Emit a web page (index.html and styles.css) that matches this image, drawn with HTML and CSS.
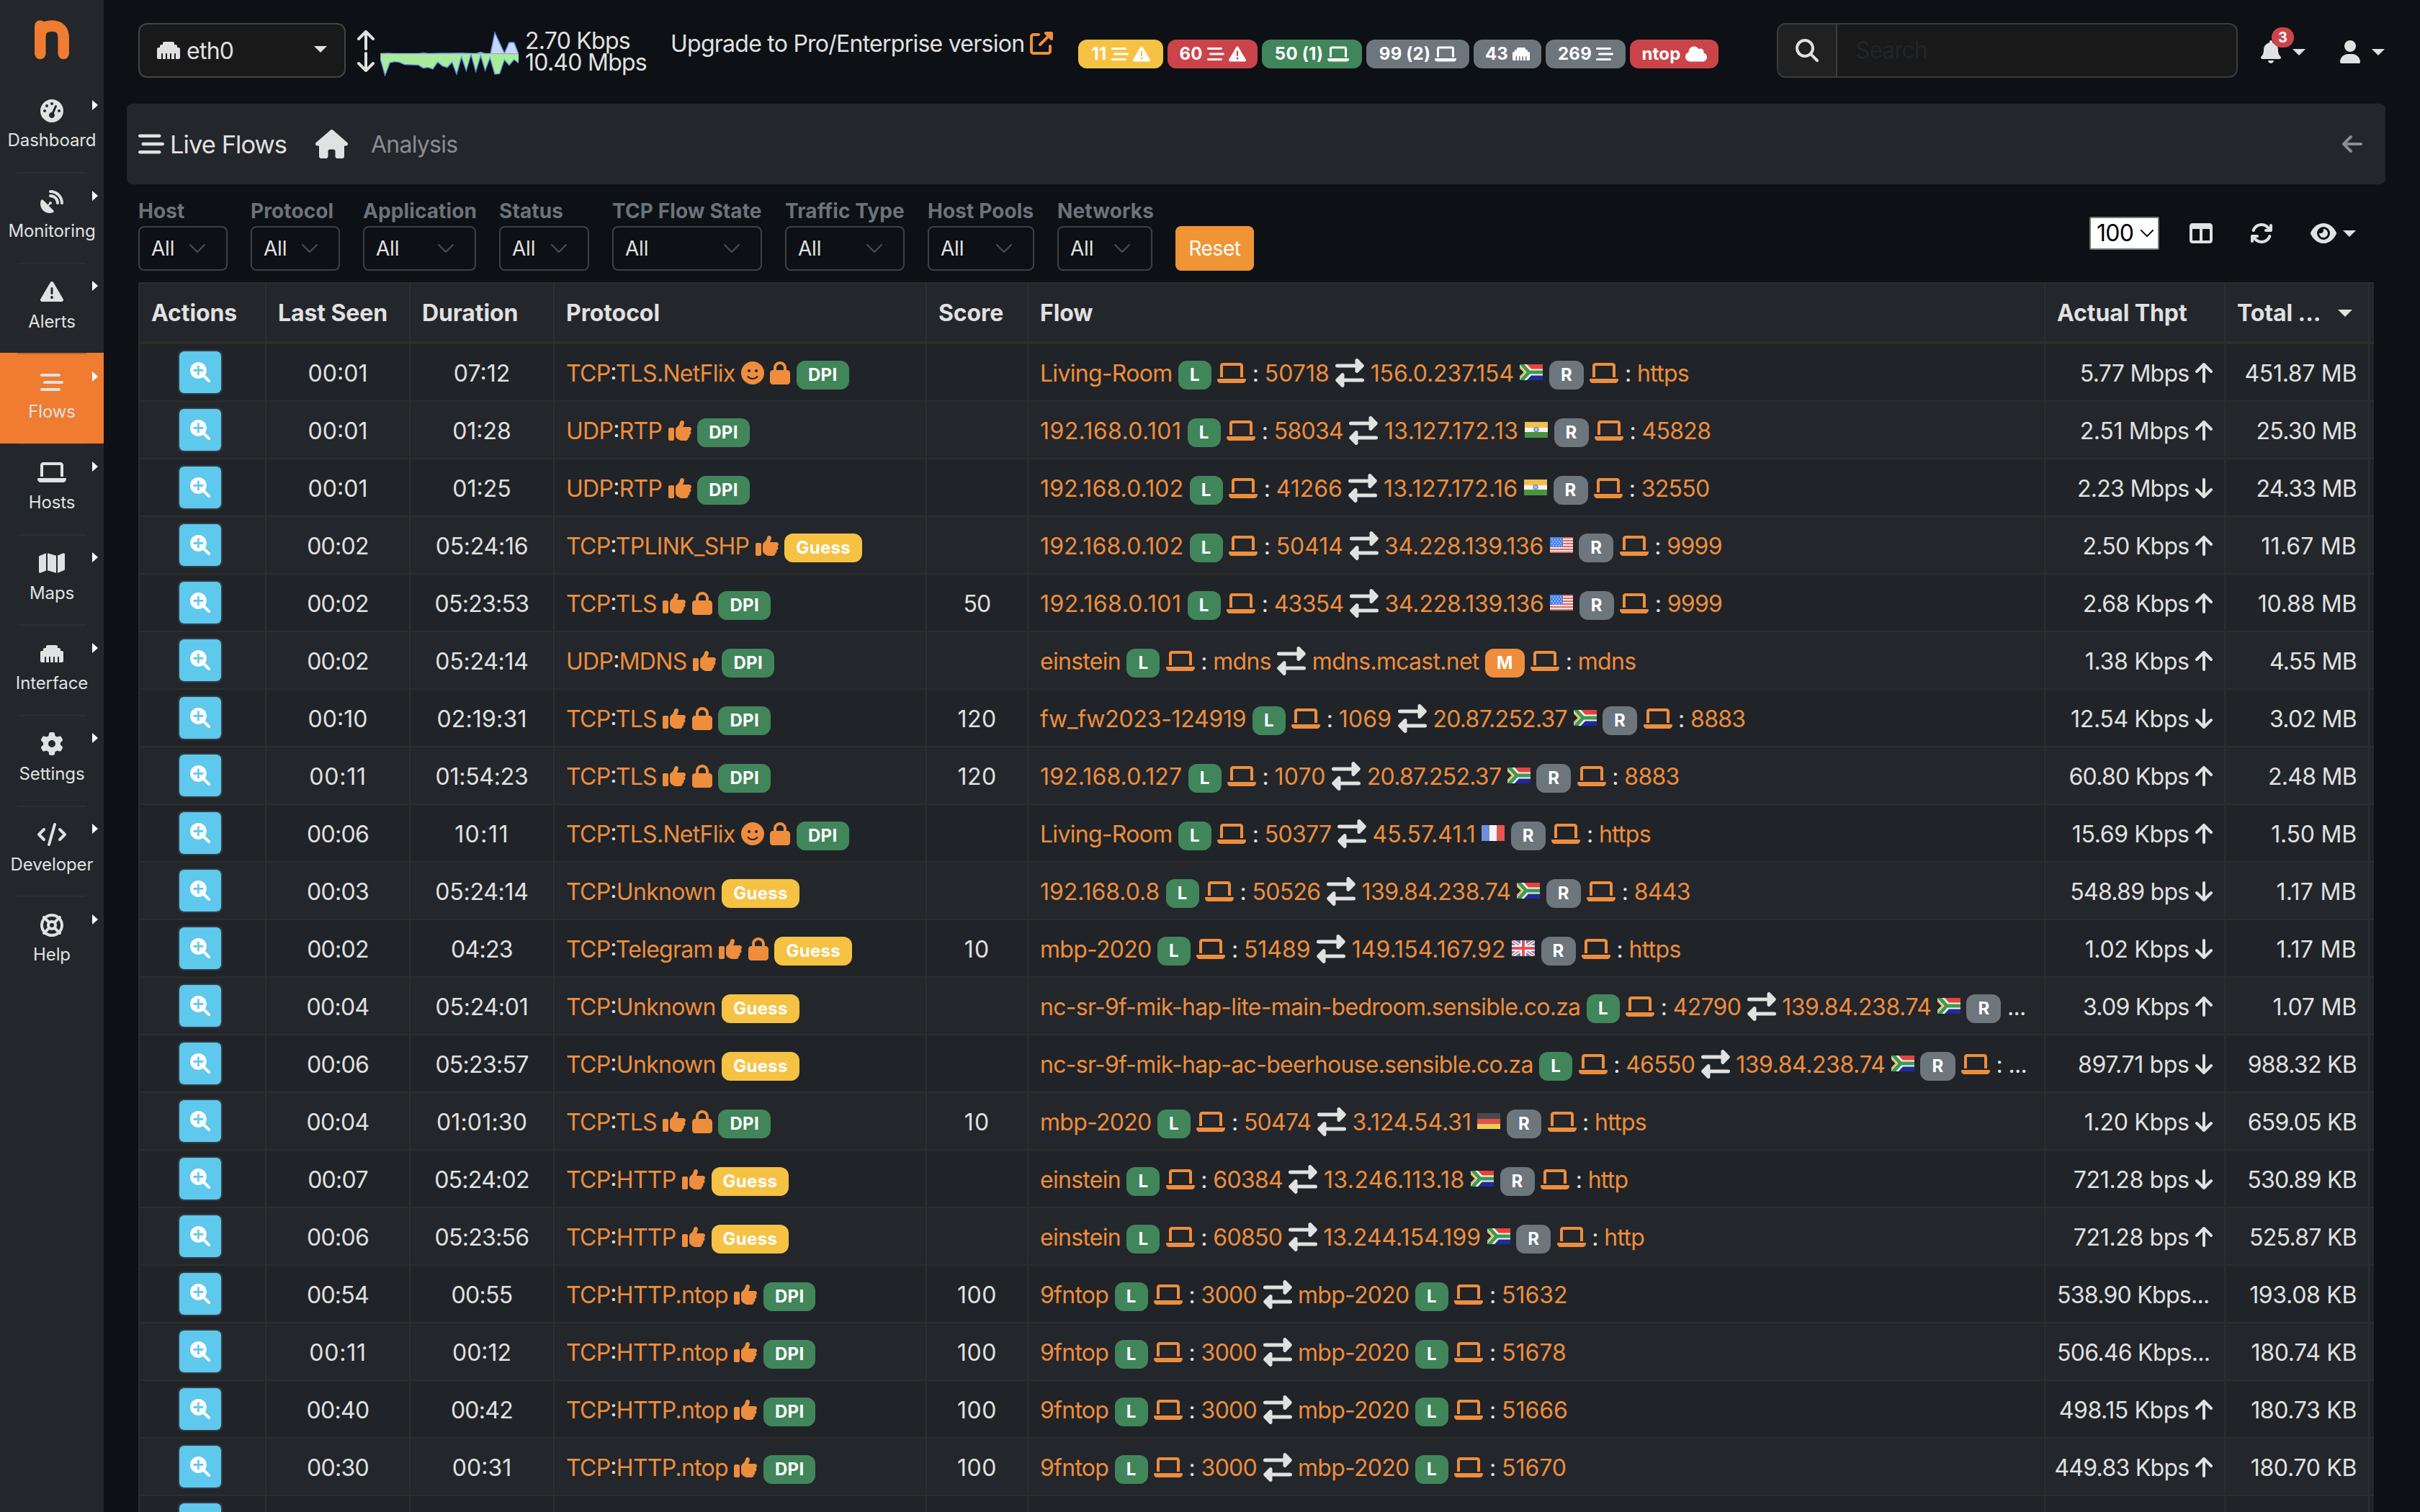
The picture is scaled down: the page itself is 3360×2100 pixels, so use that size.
FILE: index.html
```html
<!DOCTYPE html>
<html lang="en">
<head>
<meta charset="utf-8">
<title>Live Flows</title>
<link rel="stylesheet" href="styles.css">
</head>
<body>
<svg class="sprite" aria-hidden="true">
  <symbol id="gauge" viewBox="0 0 512 512"><path d="M0 256a256 256 0 1 1 512 0A256 256 0 1 1 0 256zM288 96a32 32 0 1 0 -64 0 32 32 0 1 0 64 0zM256 416c35.3 0 64-28.7 64-64c0-17.4-6.9-33.1-18.1-44.6L366 161.7c5.3-12.1-.2-26.3-12.3-31.6s-26.3 .2-31.6 12.3L257.9 288c-.6 0-1.3 0-1.9 0c-35.3 0-64 28.7-64 64s28.7 64 64 64zM176 144a32 32 0 1 0 -64 0 32 32 0 1 0 64 0zM96 288a32 32 0 1 0 0-64 32 32 0 1 0 0 64zm352-32a32 32 0 1 0 -64 0 32 32 0 1 0 64 0z"/></symbol>
  <symbol id="dish" viewBox="0 0 512 512"><path d="M192 32c0-17.7 14.3-32 32-32C383.1 0 512 128.9 512 288c0 17.7-14.3 32-32 32s-32-14.3-32-32C448 164.3 347.7 64 224 64c-17.7 0-32-14.3-32-32zM60.6 220.6L164.7 324.7l28.4-28.4c-.7-2.6-1.1-5.4-1.1-8.3c0-17.7 14.3-32 32-32s32 14.3 32 32s-14.3 32-32 32c-2.9 0-5.6-.4-8.3-1.1l-28.4 28.4L291.4 451.4c14.5 14.5 11.8 38.8-7.3 46.3C260.5 506.9 234.9 512 208 512C93.1 512 0 418.9 0 304c0-26.9 5.1-52.5 14.4-76.1c7.5-19 31.8-21.8 46.3-7.3zM224 96c106 0 192 86 192 192c0 17.7-14.3 32-32 32s-32-14.3-32-32c0-70.7-57.3-128-128-128c-17.7 0-32-14.3-32-32s14.3-32 32-32z"/></symbol>
  <symbol id="warn" viewBox="0 0 512 512"><path d="M256 32c14.2 0 27.3 7.5 34.5 19.8l216 368c7.3 12.4 7.3 27.7 .2 40.1S486.3 480 472 480H40c-14.3 0-27.6-7.7-34.7-20.1s-7-27.8 .2-40.1l216-368C228.7 39.5 241.8 32 256 32zm0 128c-13.3 0-24 10.7-24 24V296c0 13.3 10.7 24 24 24s24-10.7 24-24V184c0-13.3-10.7-24-24-24zm32 224a32 32 0 1 0 -64 0 32 32 0 1 0 64 0z"/></symbol>
  <symbol id="stream" viewBox="0 0 512 512"><path d="M0 96C0 78.3 14.3 64 32 64H416c17.7 0 32 14.3 32 32s-14.3 32-32 32H32C14.3 128 0 113.7 0 96zM64 256c0-17.7 14.3-32 32-32H480c17.7 0 32 14.3 32 32s-14.3 32-32 32H96c-17.7 0-32-14.3-32-32zM448 416c0 17.7-14.3 32-32 32H32c-17.7 0-32-14.3-32-32s14.3-32 32-32H416c17.7 0 32 14.3 32 32z"/></symbol>
  <symbol id="laptop" viewBox="0 0 640 512"><path d="M128 32C92.7 32 64 60.7 64 96V352h64V96H512V352h64V96c0-35.3-28.7-64-64-64H128zM19.2 384C8.6 384 0 392.6 0 403.2C0 445.6 34.4 480 76.8 480H563.2c42.4 0 76.8-34.4 76.8-76.8c0-10.6-8.6-19.2-19.2-19.2H19.2z"/></symbol>
  <symbol id="map" viewBox="0 0 576 512"><path d="M384 476.1L192 421.2V35.9L384 90.8V476.1zm32-1.2V88.4L543.1 37.5c15.8-6.3 32.9 5.3 32.9 22.3V394.6c0 9.8-6 18.6-15.1 22.3L416 474.8zM15.1 95.1L160 37.2V423.6L32.9 474.5C17.1 480.8 0 469.2 0 452.2V117.4c0-9.8 6-18.6 15.1-22.3z"/></symbol>
  <symbol id="ethernet" viewBox="0 0 512 512"><path d="M0 224V416c0 17.7 14.3 32 32 32H96V336c0-8.8 7.2-16 16-16s16 7.2 16 16V448h64V336c0-8.8 7.2-16 16-16s16 7.2 16 16V448h64V336c0-8.8 7.2-16 16-16s16 7.2 16 16V448h64V336c0-8.8 7.2-16 16-16s16 7.2 16 16V448h64c17.7 0 32-14.3 32-32V224c0-17.7-14.3-32-32-32H448V160c0-17.7-14.3-32-32-32H384V96c0-17.7-14.3-32-32-32H160c-17.7 0-32 14.3-32 32v32H96c-17.7 0-32 14.3-32 32v32H32c-17.7 0-32 14.3-32 32z"/></symbol>
  <symbol id="gear" viewBox="0 0 512 512"><path d="M495.9 166.6c3.2 8.7 .5 18.4-6.4 24.6l-43.3 39.4c1.1 8.3 1.7 16.8 1.7 25.4s-.6 17.1-1.7 25.4l43.3 39.4c6.9 6.2 9.6 15.9 6.4 24.6c-4.4 11.9-9.7 23.3-15.8 34.3l-4.7 8.1c-6.6 11-14 21.4-22.1 31.2c-5.9 7.2-15.7 9.6-24.5 6.8l-55.7-17.7c-13.4 10.3-28.2 18.9-44 25.4l-12.5 57.1c-2 9.1-9 16.3-18.2 17.8c-13.8 2.3-28 3.5-42.5 3.5s-28.7-1.2-42.5-3.5c-9.2-1.5-16.2-8.7-18.2-17.8l-12.5-57.1c-15.8-6.5-30.6-15.1-44-25.4L83.1 425.9c-8.8 2.8-18.6 .3-24.5-6.8c-8.1-9.8-15.5-20.2-22.1-31.2l-4.7-8.1c-6.1-11-11.4-22.4-15.8-34.3c-3.2-8.7-.5-18.4 6.4-24.6l43.3-39.4C64.6 273.1 64 264.6 64 256s.6-17.1 1.7-25.4L22.4 191.2c-6.9-6.2-9.6-15.9-6.4-24.6c4.4-11.9 9.7-23.3 15.8-34.3l4.7-8.1c6.6-11 14-21.4 22.1-31.2c5.9-7.2 15.7-9.6 24.5-6.8l55.7 17.7c13.4-10.3 28.2-18.9 44-25.4l12.5-57.1c2-9.1 9-16.3 18.2-17.8C227.3 1.2 241.5 0 256 0s28.7 1.2 42.5 3.5c9.2 1.5 16.2 8.7 18.2 17.8l12.5 57.1c15.8 6.5 30.6 15.1 44 25.4l55.7-17.7c8.8-2.8 18.6-.3 24.5 6.8c8.1 9.8 15.5 20.2 22.1 31.2l4.7 8.1c6.1 11 11.4 22.4 15.8 34.3zM256 336a80 80 0 1 0 0-160 80 80 0 1 0 0 160z"/></symbol>
  <symbol id="code" viewBox="0 0 640 512"><path d="M392.8 1.2c-17-4.9-34.7 5-39.6 22l-128 448c-4.9 17 5 34.7 22 39.6s34.7-5 39.6-22l128-448c4.9-17-5-34.7-22-39.6zm80.6 120.1c-12.5 12.5-12.5 32.8 0 45.3L562.7 256l-89.4 89.4c-12.5 12.5-12.5 32.8 0 45.3s32.8 12.5 45.3 0l112-112c12.5-12.5 12.5-32.8 0-45.3l-112-112c-12.5-12.5-32.8-12.5-45.3 0zm-306.7 0c-12.5-12.5-32.8-12.5-45.3 0l-112 112c-12.5 12.5-12.5 32.8 0 45.3l112 112c12.5 12.5 32.8 12.5 45.3 0s12.5-32.8 0-45.3L77.3 256l89.4-89.4c12.5-12.5 12.5-32.8 0-45.3z"/></symbol>
  <symbol id="ring" viewBox="0 0 512 512"><path d="M367.2 412.5C335.9 434.9 297.5 448 256 448s-79.9-13.1-111.2-35.5l58-58c15.8 8.6 34 13.5 53.3 13.5s37.4-4.9 53.3-13.5l58 58zm90.7 .8c33.8-43.4 54-98 54-157.3s-20.2-113.9-54-157.3c9-12.5 7.9-30.1-3.4-41.3S425.8 45 413.3 54C369.9 20.2 315.3 0 256 0S142.1 20.2 98.7 54c-12.5-9-30.1-7.9-41.3 3.4S45 86.2 54 98.7C20.2 142.1 0 196.7 0 256s20.2 113.9 54 157.3c-9 12.5-7.9 30.1 3.4 41.3S86.2 467 98.7 458c43.4 33.8 98 54 157.3 54s113.9-20.2 157.3-54c12.5 9 30.1 7.9 41.3-3.4s12.4-28.8 3.4-41.3zm-45.5-46.1l-58-58c8.6-15.8 13.5-34 13.5-53.3s-4.9-37.4-13.5-53.3l58-58C434.9 176.1 448 214.5 448 256s-13.1 79.9-35.5 111.2zM367.2 99.5l-58 58c-15.8-8.6-34-13.5-53.3-13.5s-37.4 4.9-53.3 13.5l-58-58C176.1 77.1 214.5 64 256 64s79.9 13.1 111.2 35.5zM157.5 309.3l-58 58C77.1 335.9 64 297.5 64 256s13.1-79.9 35.5-111.2l58 58c-8.6 15.8-13.5 34-13.5 53.3s4.9 37.4 13.5 53.3zM208 256a48 48 0 1 1 96 0 48 48 0 1 1 -96 0z"/></symbol>
  <symbol id="home" viewBox="0 0 576 512"><path d="M575.8 255.5c0 18-15 32.1-32 32.1h-32l.7 160.2c0 2.7-.2 5.4-.5 8.1V472c0 22.1-17.9 40-40 40H456c-1.1 0-2.2 0-3.3-.1c-1.4 .1-2.8 .1-4.2 .1H416 392c-22.1 0-40-17.9-40-40V448 384c0-17.7-14.3-32-32-32H256c-17.7 0-32 14.3-32 32v64 24c0 22.1-17.9 40-40 40H160 128.1c-1.5 0-3-.1-4.5-.2c-1.2 .1-2.4 .2-3.6 .2H104c-22.1 0-40-17.9-40-40V360c0-.9 0-1.9 .1-2.8V287.6H32c-18 0-32-14-32-32.1c0-9 3-17 10-24L266.4 8c7-7 15-8 22-8s15 2 21 7L564.8 231.5c8 7 12 15 11 24z"/></symbol>
  <symbol id="back" viewBox="0 0 448 512"><path d="M9.4 233.4c-12.5 12.5-12.5 32.8 0 45.3l160 160c12.5 12.5 32.8 12.5 45.3 0s12.5-32.8 0-45.3L109.2 288 416 288c17.7 0 32-14.3 32-32s-14.3-32-32-32l-306.7 0L214.6 118.6c12.5-12.5 12.5-32.8 0-45.3s-32.8-12.5-45.3 0l-160 160z"/></symbol>
  <symbol id="external" viewBox="0 0 512 512"><path d="M352 0c-12.9 0-24.6 7.8-29.6 19.8s-2.2 25.7 6.9 34.9L370.7 96 201.4 265.4c-12.5 12.5-12.5 32.8 0 45.3s32.8 12.5 45.3 0L416 141.3l41.4 41.4c9.2 9.2 22.9 11.9 34.9 6.9s19.8-16.6 19.8-29.6V32c0-17.7-14.3-32-32-32H352zM80 32C35.8 32 0 67.8 0 112V432c0 44.2 35.8 80 80 80H400c44.2 0 80-35.8 80-80V320c0-17.7-14.3-32-32-32s-32 14.3-32 32V432c0 8.8-7.2 16-16 16H80c-8.8 0-16-7.2-16-16V112c0-8.8 7.2-16 16-16H192c17.7 0 32-14.3 32-32s-14.3-32-32-32H80z"/></symbol>
  <symbol id="search" viewBox="0 0 512 512"><path d="M416 208c0 45.9-14.9 88.3-40 122.7L502.6 457.4c12.5 12.5 12.5 32.8 0 45.3s-32.8 12.5-45.3 0L330.7 376c-34.4 25.2-76.8 40-122.7 40C93.1 416 0 322.9 0 208S93.1 0 208 0S416 93.1 416 208zM208 352a144 144 0 1 0 0-288 144 144 0 1 0 0 288z"/></symbol>
  <symbol id="zoomin" viewBox="0 0 28 28"><circle cx="11.4" cy="11.4" r="11.4"/><path class="plus" d="M11.4 5.6v11.6M5.6 11.4h11.6"/><path class="handle" d="M18.5 18.5l7.6 7.6"/></symbol>
  <symbol id="bell" viewBox="0 0 448 512"><path d="M224 0c-17.7 0-32 14.3-32 32V51.2C119 66 64 130.6 64 208v18.8c0 47-17.3 92.4-48.5 127.6l-7.4 8.3c-8.4 9.4-10.4 22.9-5.3 34.4S19.4 416 32 416H416c12.6 0 24-7.4 29.2-18.9s3.1-25-5.3-34.4l-7.4-8.3C401.3 319.2 384 273.9 384 226.8V208c0-77.4-55-142-128-156.8V32c0-17.7-14.3-32-32-32zm45.3 493.3c12-12 18.7-28.3 18.7-45.3H224 160c0 17 6.7 33.3 18.7 45.3s28.3 18.7 45.3 18.7s33.3-6.7 45.3-18.7z"/></symbol>
  <symbol id="user" viewBox="0 0 448 512"><path d="M224 256A128 128 0 1 0 224 0a128 128 0 1 0 0 256zm-45.7 48C79.8 304 0 383.8 0 482.3C0 498.7 13.3 512 29.7 512H418.3c16.4 0 29.7-13.3 29.7-29.7C448 383.8 368.2 304 269.7 304H178.3z"/></symbol>
  <symbol id="columns" viewBox="0 0 512 512"><path d="M0 96C0 60.7 28.7 32 64 32H448c35.3 0 64 28.7 64 64V416c0 35.3-28.7 64-64 64H64c-35.3 0-64-28.7-64-64V96zm64 64V416H224V160H64zm384 0H288V416H448V160z"/></symbol>
  <symbol id="refresh" viewBox="0 0 512 512"><path d="M105.1 202.6c7.7-21.8 20.2-42.3 37.8-59.8c62.5-62.5 163.8-62.5 226.3 0L386.3 160H352c-17.7 0-32 14.3-32 32s14.3 32 32 32H463.5h.4c17.7 0 32-14.3 32-32V80c0-17.7-14.3-32-32-32s-32 14.3-32 32v35.2L414.4 97.6c-87.5-87.5-229.3-87.5-316.8 0C73.2 122 55.6 150.7 44.8 181.4c-5.9 16.7 2.9 34.9 19.5 40.8s34.9-2.9 40.8-19.5zM39 289.3c-5 1.5-9.8 4.2-13.7 8.2c-4 4-6.7 8.8-8.1 14c-.3 1.2-.6 2.5-.8 3.8c-.3 1.7-.4 3.4-.4 5.1V432c0 17.7 14.3 32 32 32s32-14.3 32-32V396.9l17.6 17.5c87.5 87.4 229.3 87.4 316.7 0c24.4-24.4 42.1-53.1 52.9-83.7c5.9-16.7-2.9-34.9-19.5-40.8s-34.9 2.9-40.8 19.5c-7.7 21.8-20.2 42.3-37.8 59.8c-62.5 62.5-163.8 62.5-226.3 0l-.1-.1L125.6 352H160c17.7 0 32-14.3 32-32s-14.3-32-32-32H48.4c-1.6 0-3.2 .1-4.8 .3s-3.1 .5-4.6 1z"/></symbol>
  <symbol id="eye" viewBox="0 0 576 512"><path d="M288 32c-80.8 0-145.5 36.8-192.6 80.6C48.6 156 17.3 208 2.5 243.7c-3.3 7.9-3.3 16.7 0 24.6C17.3 304 48.6 356 95.4 399.4C142.5 443.2 207.2 480 288 480s145.5-36.8 192.6-80.6c46.8-43.5 78.1-95.4 93-131.1c3.3-7.9 3.3-16.7 0-24.6c-14.9-35.7-46.2-87.7-93-131.1C433.5 68.8 368.8 32 288 32zM144 256a144 144 0 1 1 288 0 144 144 0 1 1 -288 0zm144-64c0 35.3-28.7 64-64 64c-7.1 0-13.9-1.2-20.3-3.3c-5.5-1.8-11.9 1.6-11.7 7.4c.3 6.9 1.3 13.8 3.2 20.7c13.7 51.2 66.4 81.6 117.6 67.9s81.6-66.4 67.9-117.6c-11.1-41.5-47.8-69.4-88.6-71.1c-5.8-.2-9.2 6.1-7.4 11.7c2.1 6.4 3.3 13.2 3.3 20.3z"/></symbol>
  <symbol id="thumb" viewBox="0 0 512 512"><path d="M313.4 32.9c26 5.2 42.9 30.5 37.7 56.5l-2.3 11.4c-5.3 26.7-15.1 52.1-28.8 75.2H464c26.5 0 48 21.5 48 48c0 18.5-10.5 34.6-25.9 42.6C497 275.4 504 288.9 504 304c0 23.4-16.8 42.9-38.9 47.1c4.4 7.3 6.9 15.8 6.9 24.9c0 21.3-13.9 39.4-33.1 45.6c.7 3.3 1.1 6.8 1.1 10.4c0 26.5-21.5 48-48 48H294.5c-19 0-37.5-5.6-53.3-16.1l-38.5-25.7C176 420.4 160 390.4 160 358.3V320 272 247.1c0-29.2 13.3-56.7 36-75l7.4-5.9c26.5-21.2 44.6-51 51.2-84.2l2.3-11.4c5.2-26 30.5-42.9 56.5-37.7zM32 192H96c17.7 0 32 14.3 32 32V448c0 17.7-14.3 32-32 32H32c-17.7 0-32-14.3-32-32V224c0-17.7 14.3-32 32-32z"/></symbol>
  <symbol id="lock" viewBox="0 0 448 512"><path d="M144 144v48H304V144c0-44.2-35.8-80-80-80s-80 35.8-80 80zM80 192V144C80 64.5 144.5 0 224 0s144 64.5 144 144v48h16c35.3 0 64 28.7 64 64V448c0 35.3-28.7 64-64 64H64c-35.3 0-64-28.7-64-64V256c0-35.3 28.7-64 64-64H80z"/></symbol>
  <symbol id="smile" viewBox="0 0 512 512"><path d="M256 512A256 256 0 1 0 256 0a256 256 0 1 0 0 512zM164.1 325.5C182 346.2 212.6 368 256 368s74-21.8 91.9-42.5c5.8-6.7 15.9-7.4 22.6-1.6s7.4 15.9 1.6 22.6C349.8 372.1 311.1 400 256 400s-93.8-27.9-116.1-53.5c-5.8-6.7-5.1-16.8 1.6-22.6s16.8-5.1 22.6 1.6zM144.4 208a32 32 0 1 1 64 0 32 32 0 1 1 -64 0zm192-32a32 32 0 1 1 0 64 32 32 0 1 1 0-64z"/></symbol>
  <symbol id="cloud" viewBox="0 0 640 512"><path d="M0 336c0 79.5 64.5 144 144 144H512c70.7 0 128-57.3 128-128c0-61.9-44-113.6-102.4-125.4c4.1-10.7 6.4-22.4 6.4-34.6c0-53-43-96-96-96c-19.7 0-38.1 6-53.3 16.2C367 64.2 315.3 32 256 32C167.6 32 96 103.6 96 192c0 2.7 .1 5.4 .2 8.1C40.2 219.8 0 273.2 0 336z"/></symbol>
  <symbol id="up" viewBox="0 0 24 28"><path class="line" d="M12 2v24M2 12L12 2l10 10"/></symbol>
  <symbol id="down" viewBox="0 0 24 28"><path class="line" d="M12 26V2M2 16l10 10 10-10"/></symbol>
  <symbol id="swap" viewBox="0 0 40 40"><path d="M2.5 7.5H27.5V2.5a2.4 2.4 0 0 1 4.2-1.7l7.3 7.5a2.4 2.4 0 0 1 0 3.4l-7.3 7.5a2.4 2.4 0 0 1-4.2-1.7V12.5H2.5a2.5 2.5 0 0 1 0-5zM37.500 27.500H12.500V22.500a2.400 2.400 0 0 0-4.200-1.700l-7.300 7.500a2.400 2.400 0 0 0 0 3.400l7.300 7.500a2.400 2.400 0 0 0 4.200-1.700V32.500H37.500a2.500 2.500 0 0 0 0-5z"/></symbol>
  <symbol id="chev" viewBox="0 0 22 12"><path class="thin" d="M1 1l10 10L21 1"/></symbol>
  <symbol id="za" viewBox="0 0 32 22"><path fill="#e8423c" d="M0 0h32v11H0z"/><path fill="#1f2a9c" d="M0 11h32v11H0z"/><path fill="none" stroke="#f4f4f4" stroke-width="9" d="M1 -3L14 11h18M1 25L14 11"/><path fill="none" stroke="#3f9a4c" stroke-width="5" d="M0 -3L13 11h19M0 25L13 11"/><path fill="#f0c84c" d="M0 3l8 8-8 8z"/><path fill="#222" d="M0 5.500l5.500 5.500L0 16.500z"/></symbol>
  <symbol id="in" viewBox="0 0 32 22"><path fill="#f2c04a" d="M0 0h32v8H0z"/><path fill="#f5f5f5" d="M0 8h32v6H0z"/><path fill="#4a9340" d="M0 14h32v8H0z"/><circle cx="16" cy="10.500" r="3" fill="#b9c2de" stroke="#7d8cc4" stroke-width="1.600"/></symbol>
  <symbol id="us" viewBox="0 0 32 22"><path fill="#f7e9e6" d="M0 0h32v22H0z"/><path stroke="#e56a62" stroke-width="1.800" d="M0 1h32M0 5h32M0 9h32M0 13h32M0 17h32M0 21h32"/><path fill="#4b84e8" d="M0 0h18v14H0z"/><path stroke="#c4d8fa" stroke-width="1.500" stroke-dasharray="1.500 2.500" d="M2 3h15M4 6h13M2 9h15M4 12h13"/></symbol>
  <symbol id="fr" viewBox="0 0 32 22"><path fill="#f4f4f6" d="M0 0h32v22H0z"/><path fill="#6f8fdc" d="M0 0h11v22H0z"/><path fill="#e5574f" d="M21 0h11v22H21z"/></symbol>
  <symbol id="gb" viewBox="0 0 32 22"><path fill="#5d7dc8" d="M0 0h32v22H0z"/><path stroke="#f6f2f4" stroke-width="5" d="M0 0l32 22M32 0L0 22"/><path stroke="#e06a70" stroke-width="1.600" d="M0 0l32 22M32 0L0 22"/><path stroke="#fff" stroke-width="8" d="M16 0v22M0 11h32"/><path stroke="#e2525a" stroke-width="4" d="M16 0v22M0 11h32"/></symbol>
  <symbol id="de" viewBox="0 0 32 22"><path fill="#4a4a4a" d="M0 0h32v8H0z"/><path fill="#e2504a" d="M0 8h32v7H0z"/><path fill="#f0cd50" d="M0 15h32v7H0z"/></symbol>
</svg>

<div class="app">
  <nav class="sidebar">
    <svg class="logo" viewBox="0 0 48 54"><path d="M7.800 8v38.500M7.800 24Q8 8 24 8Q40.200 8 40.200 25V46.500"/></svg>
    <a class="nav-item"><svg class="ni w32"><use href="#gauge"/></svg><span>Dashboard</span></a>
    <a class="nav-item"><svg class="ni w32"><use href="#dish"/></svg><span>Monitoring</span></a>
    <a class="nav-item"><svg class="ni w32"><use href="#warn"/></svg><span>Alerts</span></a>
    <a class="nav-item active"><svg class="ni w32"><use href="#stream"/></svg><span>Flows</span></a>
    <a class="nav-item"><svg class="ni w40"><use href="#laptop"/></svg><span>Hosts</span></a>
    <a class="nav-item"><svg class="ni w36"><use href="#map"/></svg><span>Maps</span></a>
    <a class="nav-item"><svg class="ni w32"><use href="#ethernet"/></svg><span>Interface</span></a>
    <a class="nav-item"><svg class="ni w32"><use href="#gear"/></svg><span>Settings</span></a>
    <a class="nav-item"><svg class="ni w40"><use href="#code"/></svg><span>Developer</span></a>
    <a class="nav-item"><svg class="ni w32"><use href="#ring"/></svg><span>Help</span></a>
  </nav>

  <main>
    <header class="topbar">
      <div class="iface"><svg class="w32"><use href="#ethernet"/></svg><span>eth0</span><i class="caret"></i></div>
      <div class="updown"><svg><use href="#up"/></svg><svg><use href="#down"/></svg></div>
      <svg class="chart" viewBox="144 38 576 192">
        <path class="tx" d="M144 132.500L180 131L200 132.500H303L323 129L343 132.500L403 131H440L482 130L542 132L562 126L581 132.500H603L621 45L661 131L681 86L701 86L719 132"/>
        <path class="rx" d="M144 134V155L164 223L184 170L204 166L223 168L245 178L303 180L323 193L343 190L363 197L383 168L403 184L423 190L443 168L462 218L482 146L502 204L522 136L542 208L562 141L581 203L601 150L621 218L641 216L661 158L681 181L701 157L722 173V134"/>
        <path class="zero" d="M144 133.500H720"/>
      </svg>
      <div class="rates"><div>2.70 Kbps</div><div>10.40 Mbps</div></div>
      <div class="upgrade"><span>Upgrade to Pro/Enterprise version</span><svg class="w32"><use href="#external"/></svg></div>
      <div class="counters">
        <span class="badge yellow">11<svg><use href="#stream"/></svg><svg><use href="#warn"/></svg></span>
        <span class="badge red">60<svg><use href="#stream"/></svg><svg><use href="#warn"/></svg></span>
        <span class="badge green">50 (1)<svg class="wide"><use href="#laptop"/></svg></span>
        <span class="badge gray">99 (2)<svg class="wide"><use href="#laptop"/></svg></span>
        <span class="badge gray">43<svg><use href="#ethernet"/></svg></span>
        <span class="badge gray">269<svg><use href="#stream"/></svg></span>
        <span class="badge red">ntop<svg class="wide"><use href="#cloud"/></svg></span>
      </div>
      <div class="search"><div class="search-btn"><svg class="w32"><use href="#search"/></svg></div><div class="search-input">Search</div></div>
      <div class="bell"><svg class="w28"><use href="#bell"/></svg><i class="caret"></i><b class="count">3</b></div>
      <div class="user"><svg class="w28"><use href="#user"/></svg><i class="caret"></i></div>
    </header>

    <div class="page-head">
      <svg class="w36 bars"><use href="#stream"/></svg>
      <h1>Live Flows</h1>
      <svg class="house"><use href="#home"/></svg>
      <span class="tab">Analysis</span>
      <svg class="w28 back"><use href="#back"/></svg>
    </div>

    <div class="filters">
      <div class="filter f-host"><label>Host</label><div class="select">All<svg><use href="#chev"/></svg></div></div>
      <div class="filter f-proto"><label>Protocol</label><div class="select">All<svg><use href="#chev"/></svg></div></div>
      <div class="filter f-app"><label>Application</label><div class="select">All<svg><use href="#chev"/></svg></div></div>
      <div class="filter f-status"><label>Status</label><div class="select">All<svg><use href="#chev"/></svg></div></div>
      <div class="filter f-tcp"><label>TCP Flow State</label><div class="select">All<svg><use href="#chev"/></svg></div></div>
      <div class="filter f-traffic"><label>Traffic Type</label><div class="select">All<svg><use href="#chev"/></svg></div></div>
      <div class="filter f-pools"><label>Host Pools</label><div class="select">All<svg><use href="#chev"/></svg></div></div>
      <div class="filter f-nets"><label>Networks</label><div class="select">All<svg><use href="#chev"/></svg></div></div>
      <button class="reset">Reset</button>
      <div class="tools">
        <div class="pagesize">100<svg><use href="#chev"/></svg></div>
        <svg class="w32 t-cols"><use href="#columns"/></svg>
        <svg class="w32 t-ref"><use href="#refresh"/></svg>
        <svg class="w36 t-eye"><use href="#eye"/></svg><i class="caret"></i>
      </div>
    </div>

    <table class="flows">
      <colgroup><col class="c1"><col class="c2"><col class="c3"><col class="c4"><col class="c5"><col class="c6"><col class="c7"><col class="c8"><col class="c9"></colgroup>
      <thead><tr><th>Actions</th><th>Last Seen</th><th>Duration</th><th>Protocol</th><th>Score</th><th>Flow</th><th>Actual Thpt</th><th><div class="sorted">Total ...<i class="caret sort"></i></div></th><th></th></tr></thead>
      <tbody id="rows"></tbody>
    </table>
  </main>
</div>
<script src="flows.js"></script>
</body>
</html>
```
FILE: styles.css
```css
* { box-sizing: border-box; }
html, body { margin: 0; height: 2100px; overflow: hidden; }
body { background: #0d1014; color: #e1e1e1; font: 32px/48px Inter, "Liberation Sans", sans-serif; letter-spacing: -.75px; }
svg { display: block; flex: none; fill: currentColor; width: 32px; height: 32px; overflow: visible; }
.sprite { position: absolute; width: 0; height: 0; }
.line { fill: none; stroke: currentColor; stroke-width: 4; stroke-linecap: round; stroke-linejoin: round; }
.thin { fill: none; stroke: currentColor; stroke-width: 2.4; stroke-linecap: round; stroke-linejoin: round; }
.w28 { width: 28px; } .w32 { width: 32px; } .w36 { width: 36px; } .w40 { width: 40px; }
.caret { flex: none; width: 0; height: 0; border: 9px solid transparent; border-top-color: currentColor; border-bottom: 0; }

.app { display: flex; height: 2100px; }
.sidebar { width: 144px; flex: none; background: #23262b; display: flex; flex-direction: column; }
.logo { width: 48px; height: 54px; margin: 28px 48px 31.4px; fill: none; stroke: #ef7c30; stroke-width: 15.500; stroke-linecap: round; }
.nav-item { position: relative; height: 125.65px; flex: none; display: flex; flex-direction: column; align-items: center; padding-top: 24.500px; font-size: 24px; line-height: 38px; letter-spacing: -.1px; }
.nav-item span { margin-top: 6.600px; }
.nav-item::after { content: ""; position: absolute; right: 8px; top: 25.500px; border: 7px solid transparent; border-left: 8px solid #fff; border-right: 0; }
.nav-item + .nav-item::before { content: ""; position: absolute; left: 24px; right: 24px; top: 0; height: 2px; background: rgba(67, 67, 67, .3); }
.active { background: #ef7c30; }

main { flex: 1; padding: 0 48px 0 32px; min-width: 0; }
.topbar { display: flex; align-items: flex-start; height: 144px; padding-left: 16px; }
.iface { width: 288px; height: 76px; margin-top: 32px; border: 2px solid #444; border-radius: 12px; background: #191919; display: flex; align-items: center; padding: 0 24px; gap: 9px; }
.iface svg { margin-top: -1px; }
.iface span { padding-top: 2px; }
.iface .caret { margin-left: auto; margin-top: -4px; }
.updown { margin: 42px 8px 0 16px; }
.updown svg { width: 24px; height: 28px; margin-bottom: 2px; }
.chart { width: 192px; height: 64px; margin-top: 42.700px; overflow: hidden; }
.tx { fill: #c5d7f7; stroke: #5a8ef0; stroke-width: 4; }
.rx { fill: #a6ec9b; stroke: #5a8ef0; stroke-width: 4; }
.zero { stroke: #b7c2cc; stroke-width: 3; }
.rates { margin: 42px 0 0 9px; width: 176px; line-height: 30px; white-space: nowrap; }
.upgrade { margin: 37px 0 0 26px; display: flex; gap: 8px; width: 532px; white-space: nowrap; }
.upgrade svg { color: #ee8e3d; margin-top: 7px; }
.counters { display: grid; grid-template-columns: 118px 125px 139px 143px 94px 111px 123px; gap: 6px; margin: 55px 0 0 34px; width: 891px; letter-spacing: .2px; }
.badge { display: inline-flex; align-items: center; justify-content: center; flex: none; height: 40px; padding: 0 16px; border-radius: 12px; color: #fff; font-size: 24px; font-weight: 700; line-height: 40px; gap: 6px; white-space: pre; }
.counters .badge { padding: 0; gap: 6px; }
.badge svg { width: 24px; height: 24px; }
.badge .wide { width: 30px; }
.yellow { background: #f6c244; } .red { background: #cb444a; } .green { background: #41865a; } .gray { background: #6d757d; } .orange { background: #ee8e3d; }
.search { display: flex; width: 640px; height: 76px; margin: 32px 0 0 79px; border: 2px solid #3c3c3c; border-radius: 12px; background: #191919; overflow: hidden; }
.search-btn { width: 82px; background: #212121; border-right: 2px solid #3c3c3c; padding: 20px 24px; }
.search-input { padding: 12px 25px; color: #20252a; letter-spacing: -1.100px; }
.bell, .user { position: relative; display: flex; align-items: center; gap: 16px; margin-top: 56px; }
.bell { margin-left: 32px; }
.user { margin-left: 48px; }
.count { position: absolute; left: 15px; top: -18px; width: 31px; height: 28px; border-radius: 14px; background: #cb444a; color: #fff; font-size: 20px; line-height: 28px; text-align: center; letter-spacing: 0; }

.page-head { height: 112px; background: #23262b; border-radius: 8px; display: flex; align-items: center; padding: 0 32px 0 16px; }
.bars { height: 36px; }
h1 { margin: 0 0 0 8px; font-size: 34.500px; font-weight: 400; width: 202px; white-space: nowrap; letter-spacing: -.95px; padding-top: 1px; }
.house { width: 45px; height: 40px; }
.tab { margin-left: 32px; padding-top: 2px; color: #8b8d90; }
.back { margin-left: auto; color: #8c8d8f; }

.filters { display: flex; align-items: flex-end; gap: 32px; height: 136px; padding: 0 0 16px 16px; }
.filter label { display: block; font-size: 28px; line-height: 42px; font-weight: 700; color: #6b737b; white-space: nowrap; letter-spacing: .1px; }
.select { display: flex; align-items: center; justify-content: space-between; height: 62px; border: 2px solid #3f4042; border-radius: 8px; padding: 0 29px 0 16px; font-size: 28px; letter-spacing: -.2px; }
.select svg { width: 22px; height: 12px; color: #46494d; }
.f-host, .f-proto { width: 124px; } .f-app { width: 157px; } .f-status { width: 125px; } .f-tcp { width: 208px; }
.f-traffic { width: 166px; } .f-pools { width: 148px; } .f-nets { width: 132px; }
.reset { width: 109px; height: 62px; border: 0; border-radius: 8px; background: #f09536; color: #fff; font: 28px Inter, sans-serif; letter-spacing: -.4px; padding: 0; }
.tools { margin-left: auto; align-self: flex-start; margin-top: 45px; margin-right: 41px; display: flex; align-items: center; }
.pagesize { display: flex; align-items: center; gap: 10px; width: 97px; height: 46px; padding: 0 5px 0 8px; background: #fff; color: #000; border: 2px solid #767676; border-radius: 2px; white-space: nowrap; }
.pagesize svg { width: 18px; height: 10px; }
.t-cols { margin-left: 42px; } .t-ref { margin-left: 52px; } .t-eye { margin-left: 52px; margin-right: 9px; }

.flows { margin-left: 16px; width: 3104px; table-layout: fixed; border-spacing: 0; border: 2px solid #2f2d2c; border-right: 0; background: #23262b; }
.c1 { width: 176px; } .c2, .c3, .c8 { width: 200px; } .c4 { width: 517px; } .c5 { width: 141px; } .c6 { width: 1412px; } .c7 { width: 250px; } .c9 { width: 6px; }
th { height: 84px; padding: 2px 16px 0; border-right: 2px solid #2f2d2c; border-bottom: 4px solid #2f2d2c; text-align: left; white-space: nowrap; font-weight: 700; letter-spacing: -.1px; }
td { height: 80px; padding: 0; border-right: 2px solid #2f2d2c; border-bottom: 2px solid #2f2d2c; }
th:last-child, td:last-child { border-right: 0; padding: 0; }
.sorted { display: flex; align-items: center; justify-content: space-between; padding-right: 6px; }
.sort { border-width: 10px; border-bottom: 0; }
tbody tr:nth-child(odd) { background: #202428; }
.cell { display: flex; align-items: center; gap: 8.500px; height: 78px; padding: 2px 16px 0; overflow: hidden; white-space: nowrap; }
.mid { justify-content: center; }
.end { justify-content: flex-end; }
.cell .txt { padding-top: 2px; flex: none; }
.cell a { color: #ee8e3d; }
.cell a i { color: #e1e1e1; font-style: normal; position: relative; top: -3px; }
.cell .ic { color: #ee8e3d; }
.cell .badge { margin-top: 6px; letter-spacing: .3px; }
.swap { width: 40px; height: 40px; }
.flag { width: 32px; height: 22px; margin-top: -2px; overflow: hidden; }
.arrow { width: 24px; height: 28px; }
.cut { justify-content: flex-start; padding-right: 0; }
.act { padding: 0 0 0 53px; }
.zoom { display: flex; align-items: center; justify-content: center; width: 62px; height: 62px; border-radius: 8px; border: 2px solid #343c44; background: #5ec8ed; background-clip: padding-box; }
.zoom svg { width: 28px; height: 28px; color: #fff; }
.plus { fill: none; stroke: #5ec8ed; stroke-width: 2.600; stroke-linecap: round; }
.handle { stroke: #fff; stroke-width: 4; stroke-linecap: round; }
```
FILE: flows.js
```js
// last seen | duration | protocol : application | icons | badge | score | flow tokens | throughput | total
const data = `00:01|07:12|TCP:TLS.NetFlix|smile lock|DPI||Living-Room L pc :50718 <> 156.0.237.154 za R pc :https|5.77 Mbps ^|451.87 MB
00:01|01:28|UDP:RTP|thumb|DPI||192.168.0.101 L pc :58034 <> 13.127.172.13 in R pc :45828|2.51 Mbps ^|25.30 MB
00:01|01:25|UDP:RTP|thumb|DPI||192.168.0.102 L pc :41266 <> 13.127.172.16 in R pc :32550|2.23 Mbps v|24.33 MB
00:02|05:24:16|TCP:TPLINK_SHP|thumb|Guess||192.168.0.102 L pc :50414 <> 34.228.139.136 us R pc :9999|2.50 Kbps ^|11.67 MB
00:02|05:23:53|TCP:TLS|thumb lock|DPI|50|192.168.0.101 L pc :43354 <> 34.228.139.136 us R pc :9999|2.68 Kbps ^|10.88 MB
00:02|05:24:14|UDP:MDNS|thumb|DPI||einstein L pc :mdns <> mdns.mcast.net M pc :mdns|1.38 Kbps ^|4.55 MB
00:10|02:19:31|TCP:TLS|thumb lock|DPI|120|fw_fw2023-124919 L pc :1069 <> 20.87.252.37 za R pc :8883|12.54 Kbps v|3.02 MB
00:11|01:54:23|TCP:TLS|thumb lock|DPI|120|192.168.0.127 L pc :1070 <> 20.87.252.37 za R pc :8883|60.80 Kbps ^|2.48 MB
00:06|10:11|TCP:TLS.NetFlix|smile lock|DPI||Living-Room L pc :50377 <> 45.57.41.1 fr R pc :https|15.69 Kbps ^|1.50 MB
00:03|05:24:14|TCP:Unknown||Guess||192.168.0.8 L pc :50526 <> 139.84.238.74 za R pc :8443|548.89 bps v|1.17 MB
00:02|04:23|TCP:Telegram|thumb lock|Guess|10|mbp-2020 L pc :51489 <> 149.154.167.92 gb R pc :https|1.02 Kbps v|1.17 MB
00:04|05:24:01|TCP:Unknown||Guess||nc-sr-9f-mik-hap-lite-main-bedroom.sensible.co.za L pc :42790 <> 139.84.238.74 za R ...|3.09 Kbps ^|1.07 MB
00:06|05:23:57|TCP:Unknown||Guess||nc-sr-9f-mik-hap-ac-beerhouse.sensible.co.za L pc :46550 <> 139.84.238.74 za R pc :...|897.71 bps v|988.32 KB
00:04|01:01:30|TCP:TLS|thumb lock|DPI|10|mbp-2020 L pc :50474 <> 3.124.54.31 de R pc :https|1.20 Kbps v|659.05 KB
00:07|05:24:02|TCP:HTTP|thumb|Guess||einstein L pc :60384 <> 13.246.113.18 za R pc :http|721.28 bps v|530.89 KB
00:06|05:23:56|TCP:HTTP|thumb|Guess||einstein L pc :60850 <> 13.244.154.199 za R pc :http|721.28 bps ^|525.87 KB
00:54|00:55|TCP:HTTP.ntop|thumb|DPI|100|9fntop L pc :3000 <> mbp-2020 L pc :51632|538.90 Kbps...|193.08 KB
00:11|00:12|TCP:HTTP.ntop|thumb|DPI|100|9fntop L pc :3000 <> mbp-2020 L pc :51678|506.46 Kbps...|180.74 KB
00:40|00:42|TCP:HTTP.ntop|thumb|DPI|100|9fntop L pc :3000 <> mbp-2020 L pc :51666|498.15 Kbps ^|180.73 KB
00:30|00:31|TCP:HTTP.ntop|thumb|DPI|100|9fntop L pc :3000 <> mbp-2020 L pc :51670|449.83 Kbps ^|180.70 KB
||||||||`;

const icon = (id, cls) => `<svg class="${cls}"><use href="#${id}"/></svg>`;
const badge = { L: 'green', R: 'gray', M: 'orange', DPI: 'green', Guess: 'yellow' };
const flags = ['za', 'in', 'us', 'fr', 'gb', 'de'];

// Average tracking of a string: narrow ones are opened up, every other glyph is tightened.
function text(s, tag = 'span') {
  if (!s) return '';
  const ones = s.split('1').length - 1;
  const track = (2.9 * ones - 0.72 * (s.length - ones)) / s.length;
  const body = tag === 'a' && s.includes(':') ? s.replace(':', '<i>:</i>') : s;
  return `<${tag} class="txt" style="letter-spacing:${track.toFixed(2)}px">${body}</${tag}>`;
}

function token(t) {
  if (badge[t]) return `<span class="badge ${badge[t]}">${t}</span>`;
  if (t === 'pc') return icon('laptop', 'ic w40');
  if (t === '<>') return icon('swap', 'swap');
  if (t === '^') return icon('up', 'arrow');
  if (t === 'v') return icon('down', 'arrow');
  if (t === '...') return text(t);
  if (t === ':...') return text(':') + text('...');
  if (flags.includes(t)) return icon(t, 'flag');
  if (t[0] === ':') return text(':') + text(t.slice(1), 'a');
  return text(t, 'a');
}

function rateCell(v) {
  const m = v.match(/^(.*) ([v^])$/);
  return m ? `<div class="cell end">${text(m[1])}${token(m[2])}</div>` : `<div class="cell cut">${text(v)}</div>`;
}

document.getElementById('rows').innerHTML = data.split('\n').map(line => {
  const [seen, dur, proto, icons, tag, score, flow, rate, total] = line.split('|');
  const marks = icons ? icons.split(' ').map(i => icon(i, i === 'lock' ? 'ic w28' : 'ic w32')).join('') : '';
  // The last row only peeks in at the bottom edge, above its text.
  const full = seen !== '';
  return `<tr><td><div class="cell act"><span class="zoom">${icon('zoomin', '')}</span></div></td>
    <td><div class="cell mid">${text(seen)}</div></td><td><div class="cell mid">${text(dur)}</div></td>
    <td><div class="cell">${full ? text(proto, 'a') + marks + token(tag) : ''}</div></td>
    <td><div class="cell mid">${text(score)}</div></td>
    <td><div class="cell">${full ? flow.split(' ').map(token).join('') : ''}</div></td>
    <td>${rateCell(rate)}</td><td><div class="cell end">${text(total)}</div></td><td></td></tr>`;
}).join('');
```
